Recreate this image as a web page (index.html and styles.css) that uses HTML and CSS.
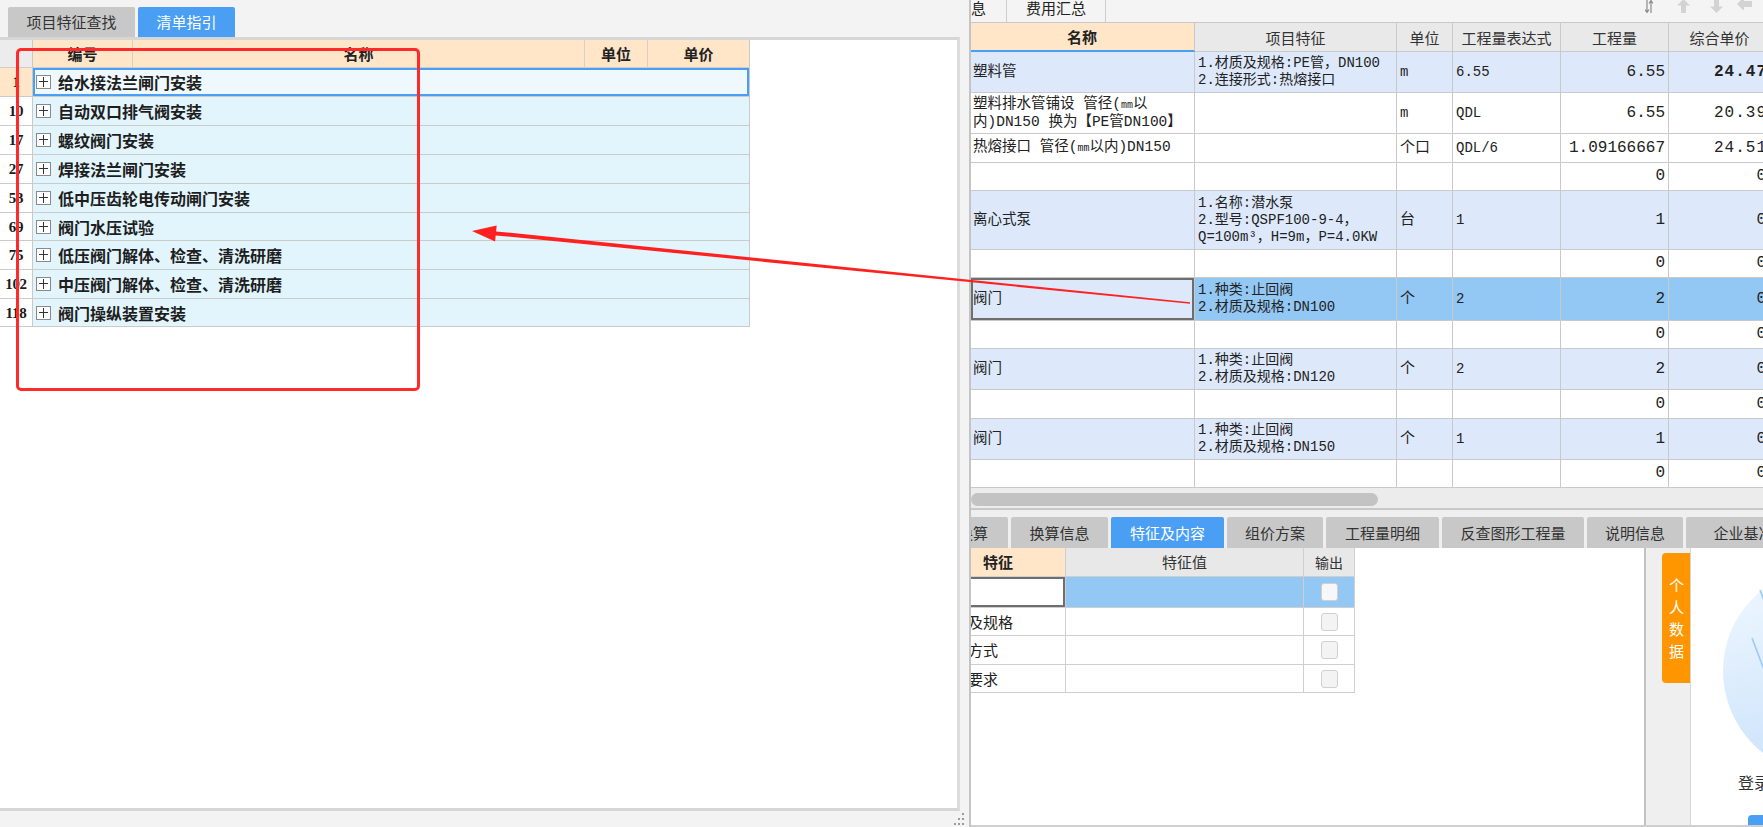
FILE: index.html
```html
<!DOCTYPE html>
<html lang="zh-CN">
<head>
<meta charset="utf-8">
<title>清单指引</title>
<link rel="stylesheet" href="styles.css">
</head>
<body>
<div class="app">
  <section class="left">
    <div class="ltabs">
      <div class="ltab t1">项目特征查找</div>
      <div class="ltab t2">清单指引</div>
    </div>
    <div class="lbody">
      <div class="ltable">
        <div class="lhead">
          <div class="rn"></div>
          <div class="hc code">编号</div>
          <div class="hc lname">名称</div>
          <div class="hc unit">单位</div>
          <div class="hc price">单价</div>
        </div>
        <div class="lrow sel"><div class="rn">1</div><div class="grp"><span class="plus"></span>给水接法兰闸门安装</div></div>
        <div class="lrow"><div class="rn">10</div><div class="grp"><span class="plus"></span>自动双口排气阀安装</div></div>
        <div class="lrow"><div class="rn">17</div><div class="grp"><span class="plus"></span>螺纹阀门安装</div></div>
        <div class="lrow"><div class="rn">27</div><div class="grp"><span class="plus"></span>焊接法兰闸门安装</div></div>
        <div class="lrow"><div class="rn">53</div><div class="grp"><span class="plus"></span>低中压齿轮电传动闸门安装</div></div>
        <div class="lrow h28"><div class="rn">69</div><div class="grp"><span class="plus"></span>阀门水压试验</div></div>
        <div class="lrow"><div class="rn">75</div><div class="grp"><span class="plus"></span>低压阀门解体、检查、清洗研磨</div></div>
        <div class="lrow"><div class="rn">102</div><div class="grp"><span class="plus"></span>中压阀门解体、检查、清洗研磨</div></div>
        <div class="lrow h28"><div class="rn">118</div><div class="grp"><span class="plus"></span>阀门操纵装置安装</div></div>
      </div>
    </div>
    <div class="lfoot">
      <svg class="grip" width="12" height="14" viewBox="0 0 12 14">
        <rect x="9" y="1" width="2" height="2" fill="#9a9a9a"/>
        <rect x="5" y="6" width="2" height="2" fill="#9a9a9a"/>
        <rect x="9" y="6" width="2" height="2" fill="#9a9a9a"/>
        <rect x="1" y="11" width="2" height="2" fill="#9a9a9a"/>
        <rect x="5" y="11" width="2" height="2" fill="#9a9a9a"/>
        <rect x="9" y="11" width="2" height="2" fill="#9a9a9a"/>
      </svg>
    </div>
  </section>

  <section class="right">
    <div class="rtop">
      <div class="rt a">息</div>
      <div class="rt b">费用汇总</div>
      <div class="ricons">
        <svg class="ic sort" width="8" height="13" viewBox="0 0 8 13">
          <path d="M2 0v12M0 9.5l2 3 2-3M6 1v12M4 3.5l2-3 2 3" stroke="#8a8a8a" stroke-width="1.2" fill="none"/>
        </svg>
        <svg class="ic up" width="13" height="13" viewBox="0 0 13 13">
          <polygon points="6.5,-1 13,5.5 9,5.5 9,13 4,13 4,5.5 0,5.5" fill="#d3d3d3"/>
        </svg>
        <svg class="ic down" width="13" height="13" viewBox="0 0 13 13">
          <polygon points="4,0 9,0 9,6.5 13,6.5 6.5,13 0,6.5 4,6.5" fill="#d3d3d3"/>
        </svg>
        <svg class="ic lft" width="15" height="10" viewBox="0 0 15 10">
          <polygon points="0,4 7,-3 7,1 15,1 15,7 7,7 7,11" fill="#d3d3d3"/>
        </svg>
      </div>
    </div>

    <div class="rgrid">
      <div class="rr hd">
        <div class="c nm">名称</div><div class="c ft">项目特征</div><div class="c un">单位</div><div class="c ex">工程量表达式</div><div class="c qt">工程量</div><div class="c pr">综合单价</div>
      </div>
      <div class="rr b h41">
        <div class="c nm">塑料管</div>
        <div class="c ft"><span>1.材质及规格:PE管，DN100<br>2.连接形式:热熔接口</span></div>
        <div class="c un">m</div><div class="c ex">6.55</div><div class="c qt">6.55</div><div class="c pr"><b>24.47</b></div>
      </div>
      <div class="rr w h41">
        <div class="c nm"><span>塑料排水管铺设 管径(<small>mm</small>以<br>内)DN150  换为【PE管DN100】</span></div>
        <div class="c ft"></div>
        <div class="c un">m</div><div class="c ex">QDL</div><div class="c qt">6.55</div><div class="c pr">20.39</div>
      </div>
      <div class="rr w h29">
        <div class="c nm"><span>热熔接口 管径(<small>mm</small>以内)DN150</span></div>
        <div class="c ft"></div>
        <div class="c un cj">个口</div><div class="c ex">QDL/6</div><div class="c qt">1.09166667</div><div class="c pr">24.51</div>
      </div>
      <div class="rr w h28">
        <div class="c nm"></div><div class="c ft"></div><div class="c un"></div><div class="c ex"></div><div class="c qt">0</div><div class="c pr">0</div>
      </div>
      <div class="rr b h59">
        <div class="c nm">离心式泵</div>
        <div class="c ft"><span>1.名称:潜水泵<br>2.型号:QSPF100-9-4，<br>Q=100m³，H=9m，P=4.0KW</span></div>
        <div class="c un cj">台</div><div class="c ex">1</div><div class="c qt">1</div><div class="c pr">0</div>
      </div>
      <div class="rr w h28">
        <div class="c nm"></div><div class="c ft"></div><div class="c un"></div><div class="c ex"></div><div class="c qt">0</div><div class="c pr">0</div>
      </div>
      <div class="rr s h43">
        <div class="c nm">阀门</div>
        <div class="c ft"><span>1.种类:止回阀<br>2.材质及规格:DN100</span></div>
        <div class="c un cj">个</div><div class="c ex">2</div><div class="c qt">2</div><div class="c pr">0</div>
      </div>
      <div class="rr w h28">
        <div class="c nm"></div><div class="c ft"></div><div class="c un"></div><div class="c ex"></div><div class="c qt">0</div><div class="c pr">0</div>
      </div>
      <div class="rr b h41">
        <div class="c nm">阀门</div>
        <div class="c ft"><span>1.种类:止回阀<br>2.材质及规格:DN120</span></div>
        <div class="c un cj">个</div><div class="c ex">2</div><div class="c qt">2</div><div class="c pr">0</div>
      </div>
      <div class="rr w h29">
        <div class="c nm"></div><div class="c ft"></div><div class="c un"></div><div class="c ex"></div><div class="c qt">0</div><div class="c pr">0</div>
      </div>
      <div class="rr b h41">
        <div class="c nm">阀门</div>
        <div class="c ft"><span>1.种类:止回阀<br>2.材质及规格:DN150</span></div>
        <div class="c un cj">个</div><div class="c ex">1</div><div class="c qt">1</div><div class="c pr">0</div>
      </div>
      <div class="rr w h28">
        <div class="c nm"></div><div class="c ft"></div><div class="c un"></div><div class="c ex"></div><div class="c qt">0</div><div class="c pr">0</div>
      </div>
    </div>

    <div class="hs"><div class="thumb"></div></div>

    <div class="rtabs">
      <div class="bt first">换算</div>
      <div class="bt w97">换算信息</div>
      <div class="bt w113 act">特征及内容</div>
      <div class="bt w96">组价方案</div>
      <div class="bt w113">工程量明细</div>
      <div class="bt w142">反查图形工程量</div>
      <div class="bt w96">说明信息</div>
      <div class="bt w130">企业基准价</div>
    </div>

    <div class="rbottom">
      <div class="fwrap">
        <div class="fr fh">
          <div class="fc k">特征</div><div class="fc v">特征值</div><div class="fc o">输出</div>
        </div>
        <div class="fr sel h31">
          <div class="fc k"></div><div class="fc v"></div><div class="fc o"><span class="cb"></span></div>
        </div>
        <div class="fr">
          <div class="fc k"><span class="cut">材质及规格</span></div><div class="fc v"></div><div class="fc o"><span class="cb"></span></div>
        </div>
        <div class="fr h29">
          <div class="fc k"><span class="cut">连接方式</span></div><div class="fc v"></div><div class="fc o"><span class="cb"></span></div>
        </div>
        <div class="fr">
          <div class="fc k"><span class="cut">技术要求</span></div><div class="fc v"></div><div class="fc o"><span class="cb"></span></div>
        </div>
      </div>
      <div class="sep"></div>
      <div class="side"><div class="otab"><span>个人数据</span></div></div>
      <div class="login">
        <svg class="circle" width="210" height="210" viewBox="0 0 210 210">
          <defs>
            <linearGradient id="cg" x1="0" y1="0" x2="0.3" y2="1">
              <stop offset="0" stop-color="#f1f8ff"/>
              <stop offset="1" stop-color="#cbe2fb"/>
            </linearGradient>
          </defs>
          <circle cx="105" cy="105" r="104" fill="url(#cg)"/>
          <path d="M38 24 L62 86 M30 72 L52 130" stroke="#9ccaf6" stroke-width="1.6" fill="none"/>
        </svg>
        <div class="ltext">登录查看个人数据</div>
        <div class="lbtn"></div>
      </div>
    </div>
  </section>
</div>

<div class="mark"></div>
<svg class="arrow" width="1763" height="827" viewBox="0 0 1763 827">
  <polygon points="472,231 496.7,225.4 496.1,231.4 1190.1,302.2 1189.9,303.8 495.7,235.4 495.1,241.4" fill="#ff2020"/>
</svg>
</body>
</html>
```

FILE: styles.css
```css
* { box-sizing: border-box; }
html, body { margin: 0; padding: 0; }
body {
  width: 1763px;
  height: 827px;
  overflow: hidden;
  background: #f3f3f3;
  font-family: "Noto Sans CJK SC", "Noto Sans", sans-serif;
  color: #222;
  position: relative;
}
.app { display: flex; width: 1763px; height: 827px; }

/* ---------- left panel ---------- */
.left { flex: none; width: 969px; display: flex; flex-direction: column; }
.ltabs { flex: none; height: 37px; display: flex; align-items: flex-end; gap: 3px; padding-left: 8px; }
.ltab {
  height: 30px; display: flex; align-items: center; justify-content: center;
  font-size: 15px; line-height: 18px; color: #333; background: #c8c8c8;
  border-radius: 2px 2px 0 0;
}
.ltab.t1 { width: 127px; }
.ltab.t2 { width: 97px; background: #4a9ff5; color: #fff; }
.lbody {
  flex: none; width: 960px; height: 774px; background: #fff;
  border-top: 3px solid #d6d6d6; border-bottom: 3px solid #d6d6d6; border-right: 3px solid #dcdcdc;
}
.ltable { width: 750px; border-right: 1px solid #c9c9c9; }
.lhead { display: flex; height: 28px; border-bottom: 1px solid #cdcdcd; }
.lhead .rn { background: #ececec; }
.rn {
  flex: none; width: 33px; border-right: 1px solid #c9c9c9;
  display: flex; align-items: center; justify-content: center;
  font-family: "Liberation Serif", serif; font-weight: 700; font-size: 15px; line-height: 16px; color: #1a1a1a;
  white-space: nowrap; letter-spacing: -0.3px;
}
.hc {
  background: #ffe6c9; border-right: 1px solid #dccfbd;
  display: flex; align-items: center; justify-content: center;
  font-weight: 700; font-size: 15px; line-height: 18px; color: #222;
}
.hc.code { width: 100px; }
.hc.lname { width: 452px; }
.hc.unit { width: 63px; }
.hc.price { width: 101px; border-right: none; }
.lrow { display: flex; height: 29px; border-bottom: 1px solid #cbcbcb; }
.lrow.h28 { height: 28px; }
.grp {
  flex: 1; background: #e2f5fd; display: flex; align-items: center; padding-left: 3px;
  font-weight: 700; font-size: 16px; line-height: 20px; color: #1e1e1e; white-space: nowrap;
}
.lrow.sel .rn { background: #ffe6c9; }
.lrow.sel .grp { background: #eff9fd; box-shadow: inset 0 0 0 2px #4a9ff5; }
.plus {
  flex: none; width: 15px; height: 14px; border: 1px solid #8a8a8a; background: #fff;
  margin-right: 7px; position: relative;
}
.plus::before, .plus::after { content: ""; position: absolute; background: #333; }
.plus::before { left: 2px; right: 2px; top: 5px; height: 1px; }
.plus::after { top: 1px; bottom: 1px; left: 6px; width: 1px; }
.lfoot { flex: 1; display: flex; justify-content: flex-end; align-items: flex-end; padding: 0 4px 1px 0; }

/* ---------- right panel ---------- */
.right {
  flex: none; width: 794px; border-left: 2px solid #c4c4c4; overflow: hidden;
  display: flex; flex-direction: column; background: #fff;
}
.rtop { flex: none; height: 22px; display: flex; background: #f4f4f4; }
.rt {
  font-size: 15px; line-height: 16px; color: #222; border-right: 1px solid #cdcdcd;
  white-space: nowrap; overflow: hidden;
}
.rt.a { width: 36px; }
.rt.b { width: 99px; text-align: center; }
.ricons { margin-left: auto; display: flex; align-items: flex-start; padding-right: 11px; }
.ic { display: block; flex: none; }
.ic.up { margin-left: 24px; }
.ic.down { margin-left: 20px; }
.ic.lft { margin-left: 14px; }

.rgrid { flex: none; }
.rr {
  display: grid; grid-template-columns: 224px 202px 56px 108px 108px 102px;
  width: 800px; height: 28px; border-bottom: 1px solid #c9c9c9;
}
.rr.h29 { height: 29px; }
.rr.h41 { height: 41px; }
.rr.h43 { height: 43px; }
.rr.h59 { height: 59px; }
.c {
  border-right: 1px solid #c9c9c9; display: flex; align-items: center; padding: 0 3px;
  overflow: hidden; white-space: nowrap;
  font-family: "Liberation Mono", "Noto Sans CJK SC", monospace;
  font-size: 14px; line-height: 17px; color: #222;
}
.c small { font-size: 10px; }
.c.nm { font-size: 14.5px; padding-left: 2px; }
.c.un.cj { font-size: 15px; }
.c.qt, .c.pr { justify-content: flex-end; font-size: 16px; }
.c.pr { letter-spacing: 1px; }
.rr.hd { height: 30px; border-top: 1px solid #c9c9c9; border-bottom: none; }
.rr.hd .c {
  justify-content: center; background: #e9e9e9; border-bottom: 1px solid #c9c9c9;
  font-family: "Noto Sans CJK SC", sans-serif; font-size: 15px; color: #333; letter-spacing: 0;
}
.rr.hd .c.nm { background: #ffe6c9; font-weight: 700; border-bottom: 2px solid #4a9ff5; color: #222; }
.rr.b .c { background: #dde9fb; }
.rr.s .c { background: #93c7f4; }
.rr.s .c.nm { background: #dde9fb; box-shadow: inset 0 0 0 2px #6e6e6e; }

.hs { flex: none; height: 22px; background: #ececec; border-bottom: 2px solid #c8c8c8; padding-top: 5px; }
.thumb { width: 407px; height: 13px; border-radius: 7px; background: #c3c3c3; }

.rtabs { flex: none; height: 38px; display: flex; align-items: flex-end; gap: 3px; background: #efefef; }
.bt {
  flex: none; height: 31px; display: flex; align-items: center; justify-content: center;
  font-size: 15px; line-height: 18px; color: #333; background: #c8c8c8;
  border-radius: 2px 2px 0 0; white-space: nowrap; overflow: hidden;
}
.bt.act { background: #4a9ff5; color: #fff; }
.bt.first { width: 37px; justify-content: flex-end; padding-right: 20px; border-radius: 0 2px 0 0; }
.bt.w96 { width: 96px; }
.bt.w97 { width: 97px; }
.bt.w113 { width: 113px; }
.bt.w130 { width: 130px; }
.bt.w142 { width: 142px; }

.rbottom { flex: none; height: 279px; display: flex; border-bottom: 2px solid #cfcfcf; }
.fwrap { flex: none; width: 673px; background: #fff; }
.fr {
  display: grid; grid-template-columns: 95px 238px 51px; width: 384px; height: 28px;
  border-bottom: 1px solid #cfcfcf;
}
.fr.fh { height: 29px; }
.fr.h29 { height: 29px; }
.fr.h31 { height: 31px; }
.fc {
  border-right: 1px solid #cfcfcf; display: flex; align-items: center; overflow: hidden;
  white-space: nowrap; font-size: 15px; line-height: 18px; color: #222;
}
.fh .fc { background: #e8e8e8; justify-content: center; color: #333; }
.fh .fc.k { background: #ffe6c9; font-weight: 700; justify-content: flex-start; padding-left: 12px; color: #222; }
.fh .fc.o { font-size: 14px; }
.fc.o { justify-content: center; }
.fr.sel .fc.v, .fr.sel .fc.o { background: #93c7f4; }
.fr.sel .fc.k { box-shadow: inset 0 2px 0 #6e6e6e, inset 0 -2px 0 #6e6e6e, inset -2px 0 0 #6e6e6e; }
.cut { flex: none; margin-left: -33px; }
.cb {
  display: block; width: 17px; height: 18px; border: 1px solid #d0d0d0; border-radius: 3px; background: #f3f3f3;
}
.fr.sel .cb { background: #f7f7f7; }

.sep { flex: none; width: 2px; background: #c2c2c2; }
.side { flex: none; width: 44px; background: #efefef; padding: 5px 0 0 16px; }
.otab {
  width: 28px; height: 130px; background: #ff9600; border-radius: 4px 0 0 4px;
  display: flex; align-items: center; justify-content: center;
}
.otab span {
  writing-mode: vertical-rl; letter-spacing: 7px; color: #fff; font-size: 15px; line-height: 16px;
  padding-top: 7px;
}
.login { flex: 1; min-width: 0; border-left: 1px solid #d6d6d6; background: #fff; overflow: hidden; }
.circle { display: block; margin: 18px 0 0 31px; }
.ltext { margin: -4px 0 0 47px; font-size: 16px; line-height: 20px; color: #333; white-space: nowrap; }
.lbtn { margin: 23px 0 0 57px; width: 120px; height: 30px; background: #4a9ff5; border-radius: 4px; }

/* ---------- annotations ---------- */
.mark {
  position: absolute; left: 16px; top: 48px; width: 404px; height: 343px;
  border: 3px solid #ff2b2b; border-radius: 5px; pointer-events: none;
}
.arrow { position: absolute; left: 0; top: 0; pointer-events: none; }
```
